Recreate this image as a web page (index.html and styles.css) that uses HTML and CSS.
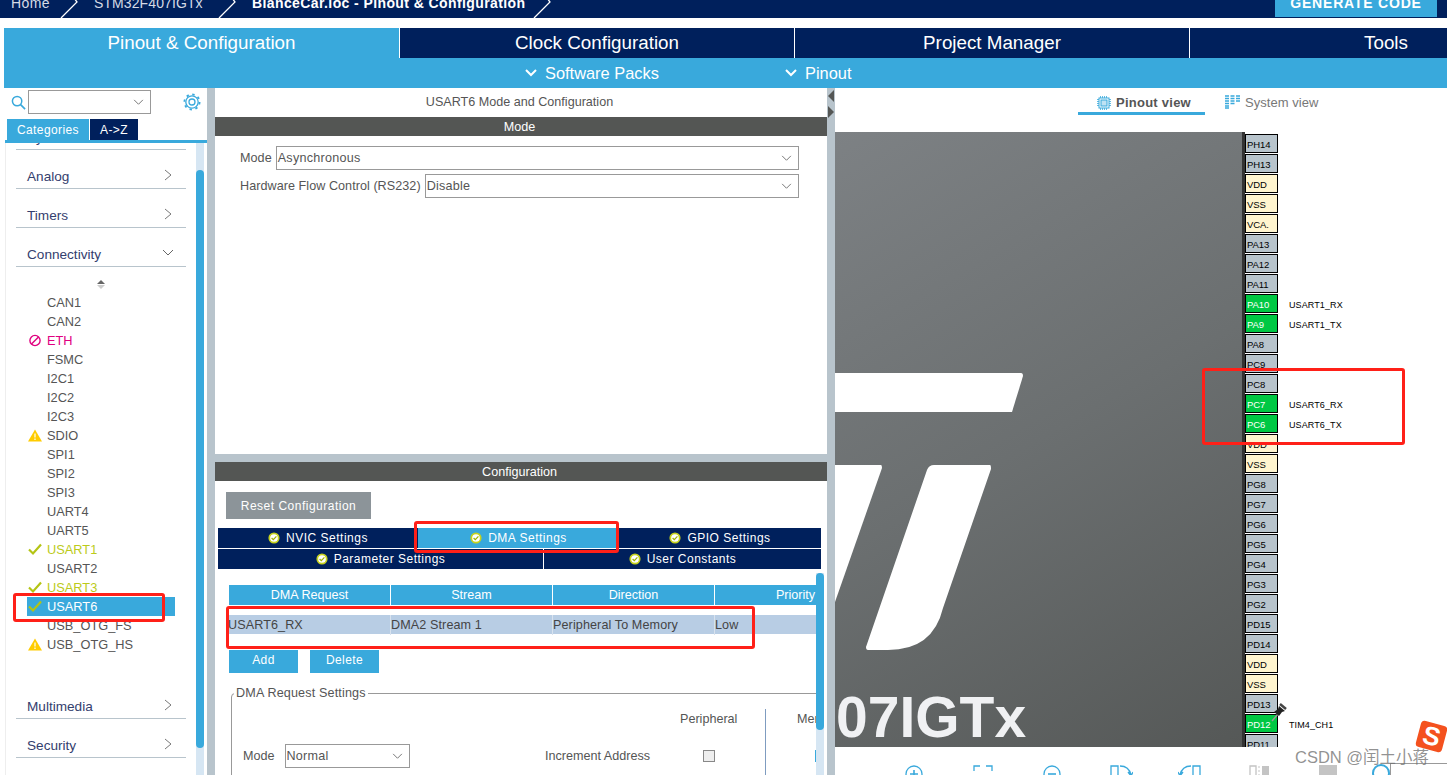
FILE: index.html
```html
<!DOCTYPE html>
<html lang="en">
<head>
    <meta charset="UTF-8">
    <title>STM32CubeMX - BlanceCar.ioc</title>
    <link rel="stylesheet" href="styles.css">
</head>
<body>
    <svg class="defs" width="0" height="0">
        <symbol id="ok" viewBox="0 0 14 14">
            <circle cx="7" cy="7" r="5.5" fill="#fff" stroke="#c6d21e" stroke-width="2"/>
            <path d="M4.2 7l2 2 3.6-4" fill="none" stroke="#9fb000" stroke-width="1.4"/>
        </symbol>
        <symbol id="check" viewBox="0 0 14 12">
            <path d="M1 6l4 4 8-9" fill="none" stroke="#b4c414" stroke-width="2.2"/>
        </symbol>
        <symbol id="warn" viewBox="0 0 14 12">
            <path d="M7 0l7 12H0z" fill="#ffcc00"/>
            <path d="M7 4v4M7 9v1.5" stroke="#fff" stroke-width="1.2"/>
        </symbol>
        <symbol id="right" viewBox="0 0 8 12">
            <path d="M1 1l6 5-6 5" fill="none" stroke="#777" stroke-width="1"/>
        </symbol>
        <symbol id="down" viewBox="0 0 12 8">
            <path d="M1 1l5 5 5-5" fill="none" stroke="#666" stroke-width="1"/>
        </symbol>
        <symbol id="wdown" viewBox="0 0 12 8">
            <path d="M1 1l5 5 5-5" fill="none" stroke="#fff" stroke-width="2"/>
        </symbol>
        <symbol id="slash" viewBox="0 0 20 18">
            <path d="M1 18L17 2L14 -2" fill="none" stroke="#fff" stroke-width="1.3"/>
        </symbol>
    </svg>

    <div class="topbar">
        <div class="crumbs">
            <span class="crumb crumb-home">Home</span>
            <svg class="slash"><use href="#slash"/></svg>
            <span class="crumb crumb-chip">STM32F407IGTx</span>
            <svg class="slash"><use href="#slash"/></svg>
            <span class="crumb crumb-file">BlanceCar.ioc - Pinout &amp; Configuration</span>
            <svg class="slash"><use href="#slash"/></svg>
        </div>
        <button class="generate">GENERATE CODE</button>
    </div>

    <div class="main-tabs">
        <div class="main-tab active">Pinout &amp; Configuration</div>
        <div class="main-tab">Clock Configuration</div>
        <div class="main-tab">Project Manager</div>
        <div class="main-tab last">Tools</div>
    </div>
    <div class="subbar">
        <span class="sub-item sub-packs"><svg class="sub-arrow"><use href="#wdown"/></svg>Software Packs</span>
        <span class="sub-item"><svg class="sub-arrow"><use href="#wdown"/></svg>Pinout</span>
    </div>

    <div class="workspace">
        <div class="side">
            <div class="search-row">
                <svg class="search-icon" viewBox="0 0 16 16"><circle cx="6.5" cy="6.5" r="5" fill="none" stroke="#39a9dc" stroke-width="1.6"/><path d="M10 10l5 5" stroke="#39a9dc" stroke-width="1.8"/></svg>
                <div class="search-box"><svg class="box-arrow"><use href="#down"/></svg></div>
                <svg class="gear" viewBox="0 0 18 18"><circle cx="9" cy="9" r="3" fill="none" stroke="#39a9dc" stroke-width="1.3"/><circle cx="9" cy="9" r="6.2" fill="none" stroke="#39a9dc" stroke-width="1.3"/><circle cx="9" cy="9" r="7.6" fill="none" stroke="#39a9dc" stroke-width="1.8" stroke-dasharray="2.4 3.57"/></svg>
            </div>
            <div class="side-tabs">
                <span class="side-tab active">Categories</span>
                <span class="side-tab">A-&gt;Z</span>
            </div>
            <div class="side-body">
                <div class="cats">
                    <div class="cat cut">System Core</div>
                    <div class="cat">Analog<svg class="cat-arrow"><use href="#right"/></svg></div>
                    <div class="cat">Timers<svg class="cat-arrow"><use href="#right"/></svg></div>
                    <div class="cat">Connectivity<svg class="cat-down"><use href="#down"/></svg></div>
                    <div class="sort-arrows"><i class="up"></i><i class="dn"></i></div>
                    <ul class="ips">
                        <li>CAN1</li>
                        <li>CAN2</li>
                        <li class="err"><svg class="ip-icon" viewBox="0 0 14 14"><circle cx="7" cy="7" r="5.5" fill="none" stroke="#e0007f" stroke-width="1.5"/><path d="M3.2 10.8l7.6-7.6" stroke="#e0007f" stroke-width="1.5"/></svg>ETH</li>
                        <li>FSMC</li>
                        <li>I2C1</li>
                        <li>I2C2</li>
                        <li>I2C3</li>
                        <li><svg class="ip-icon"><use href="#warn"/></svg>SDIO</li>
                        <li>SPI1</li>
                        <li>SPI2</li>
                        <li>SPI3</li>
                        <li>UART4</li>
                        <li>UART5</li>
                        <li class="on"><svg class="ip-icon"><use href="#check"/></svg>USART1</li>
                        <li>USART2</li>
                        <li class="on"><svg class="ip-icon"><use href="#check"/></svg>USART3</li>
                        <li class="selected"><svg class="ip-icon"><use href="#check"/></svg>USART6</li>
                        <li>USB_OTG_FS</li>
                        <li><svg class="ip-icon"><use href="#warn"/></svg>USB_OTG_HS</li>
                    </ul>
                    <div class="cat">Multimedia<svg class="cat-arrow"><use href="#right"/></svg></div>
                    <div class="cat">Security<svg class="cat-arrow"><use href="#right"/></svg></div>
                </div>
                <div class="scroll side-scroll"><div class="thumb"></div></div>
            </div>
        </div>

        <div class="gutter"></div>

        <div class="middle">
            <div class="mode-pane">
                <div class="pane-title">USART6 Mode and Configuration</div>
                <div class="pane-head">Mode</div>
                <div class="form-row">
                    <label>Mode</label>
                    <div class="select">Asynchronous<svg class="box-arrow"><use href="#down"/></svg></div>
                </div>
                <div class="form-row">
                    <label>Hardware Flow Control (RS232)</label>
                    <div class="select">Disable<svg class="box-arrow"><use href="#down"/></svg></div>
                </div>
            </div>
            <div class="hsplit"></div>
            <div class="config-pane">
                <div class="pane-head">Configuration</div>
                <button class="reset">Reset Configuration</button>
                <div class="cfg-tabs three">
                    <div class="cfg-tab"><svg class="ok"><use href="#ok"/></svg>NVIC Settings</div>
                    <div class="cfg-tab active"><svg class="ok"><use href="#ok"/></svg>DMA Settings</div>
                    <div class="cfg-tab"><svg class="ok"><use href="#ok"/></svg>GPIO Settings</div>
                </div>
                <div class="cfg-tabs two">
                    <div class="cfg-tab"><svg class="ok"><use href="#ok"/></svg>Parameter Settings</div>
                    <div class="cfg-tab"><svg class="ok"><use href="#ok"/></svg>User Constants</div>
                </div>
                <div class="cfg-body">
                    <div class="cfg-content">
                        <div class="dma-grid dma-head">
                            <div>DMA Request</div>
                            <div>Stream</div>
                            <div>Direction</div>
                            <div>Priority</div>
                        </div>
                        <div class="dma-grid dma-row">
                            <div>USART6_RX</div>
                            <div>DMA2 Stream 1</div>
                            <div>Peripheral To Memory</div>
                            <div>Low</div>
                        </div>
                        <div class="dma-btns">
                            <button class="dma-btn">Add</button>
                            <button class="dma-btn">Delete</button>
                        </div>
                        <fieldset class="dma-settings">
                            <legend>DMA Request Settings</legend>
                            <div class="dma-form">
                                <div class="col-periph">Peripheral</div>
                                <div class="col-mem">Memory</div>
                                <div class="mode-field">
                                    <span>Mode</span>
                                    <div class="select small">Normal<svg class="box-arrow"><use href="#down"/></svg></div>
                                </div>
                                <div class="inc-label">Increment Address</div>
                                <div class="inc-box"><span class="checkbox"></span></div>
                                <div class="inc-mem"><span class="checkbox blue"></span></div>
                            </div>
                        </fieldset>
                    </div>
                    <div class="scroll cfg-scroll"><div class="thumb"></div></div>
                </div>
            </div>
        </div>

        <div class="gutter narrow">
            <i class="tri-left"></i>
            <i class="tri-right"></i>
        </div>

        <div class="pinout">
            <div class="view-tabs">
                <div class="view-tab active">
                    <svg class="view-icon" viewBox="0 0 14 14"><rect x="2" y="2" width="10" height="10" fill="none" stroke="#39a9dc" stroke-width="1"/><rect x="4" y="4" width="6" height="6" fill="#bfe2f3" stroke="#39a9dc"/><path d="M3.5 0v2M5.5 0v2M7.5 0v2M9.5 0v2M3.5 12v2M5.5 12v2M7.5 12v2M9.5 12v2M0 3.5h2M0 5.5h2M0 7.5h2M0 9.5h2M12 3.5h2M12 5.5h2M12 7.5h2M12 9.5h2" stroke="#39a9dc" stroke-width=".8"/></svg>
                    Pinout view
                </div>
                <div class="view-tab system">
                    <svg class="view-icon sys" viewBox="0 0 15 14"><path d="M0 1h4M5.500 1h4M11 1h4M0 3.500h4M5.500 3.500h4M11 3.500h4M0 6h4M5.500 6h4M11 6h4M0 8.500h4M5.500 8.500h4M0 11h4M0 13h4" stroke="#39a9dc" stroke-width="1.300"/></svg>
                    System view
                </div>
            </div>
            <div class="stage">
                <div class="chip">
                    <svg class="st-logo" viewBox="835 132 405 615">
                        <path d="M835 373H1021q2 0 2 3L1012 412H835z" fill="#fff"/>
                        <path d="M835 465H881q1 0 1 3L835 602z" fill="#fff"/>
                        <path d="M927 470q2-5 7-5H990q1 0 1 4L943 608q-10 42-55 42H868q-2 0-2-3z" fill="#fff"/>
                    </svg>
                    <span class="chip-name">07IGTx</span>
                </div>
                <div class="pins">
                    <div class="pin-row"><span class="pin">PH14</span></div>
                    <div class="pin-row"><span class="pin">PH13</span></div>
                    <div class="pin-row"><span class="pin power">VDD</span></div>
                    <div class="pin-row"><span class="pin power">VSS</span></div>
                    <div class="pin-row"><span class="pin power">VCA.</span></div>
                    <div class="pin-row"><span class="pin">PA13</span></div>
                    <div class="pin-row"><span class="pin">PA12</span></div>
                    <div class="pin-row"><span class="pin">PA11</span></div>
                    <div class="pin-row"><span class="pin used">PA10</span><span class="pin-label">USART1_RX</span></div>
                    <div class="pin-row"><span class="pin used">PA9</span><span class="pin-label">USART1_TX</span></div>
                    <div class="pin-row"><span class="pin">PA8</span></div>
                    <div class="pin-row"><span class="pin">PC9</span></div>
                    <div class="pin-row"><span class="pin">PC8</span></div>
                    <div class="pin-row"><span class="pin used">PC7</span><span class="pin-label">USART6_RX</span></div>
                    <div class="pin-row"><span class="pin used">PC6</span><span class="pin-label">USART6_TX</span></div>
                    <div class="pin-row"><span class="pin power">VDD</span></div>
                    <div class="pin-row"><span class="pin power">VSS</span></div>
                    <div class="pin-row"><span class="pin">PG8</span></div>
                    <div class="pin-row"><span class="pin">PG7</span></div>
                    <div class="pin-row"><span class="pin">PG6</span></div>
                    <div class="pin-row"><span class="pin">PG5</span></div>
                    <div class="pin-row"><span class="pin">PG4</span></div>
                    <div class="pin-row"><span class="pin">PG3</span></div>
                    <div class="pin-row"><span class="pin">PG2</span></div>
                    <div class="pin-row"><span class="pin">PD15</span></div>
                    <div class="pin-row"><span class="pin">PD14</span></div>
                    <div class="pin-row"><span class="pin power">VDD</span></div>
                    <div class="pin-row"><span class="pin power">VSS</span></div>
                    <div class="pin-row"><span class="pin">PD13</span></div>
                    <div class="pin-row"><span class="pin used">PD12</span><span class="pin-label">TIM4_CH1</span></div>
                    <div class="pin-row"><span class="pin">PD11</span></div>
                </div>
            </div>
            <div class="toolbar">
                <svg class="tool" viewBox="0 0 24 24"><circle cx="12" cy="12" r="8" fill="none" stroke="#39a9dc" stroke-width="1.300"/><path d="M8 12h8M12 8v8" stroke="#39a9dc" stroke-width="1.600"/></svg>
                <svg class="tool" viewBox="0 0 24 24"><path d="M3 9V4h6M15 4h6v5M3 15v5h6M15 20h6v-5" fill="none" stroke="#39a9dc" stroke-width="1.300"/></svg>
                <svg class="tool" viewBox="0 0 24 24"><circle cx="12" cy="12" r="8" fill="none" stroke="#39a9dc" stroke-width="1.300"/><path d="M8 12h8" stroke="#39a9dc" stroke-width="1.600"/></svg>
                <svg class="tool" viewBox="0 0 24 24"><path d="M2 4h7v18H2z" fill="none" stroke="#39a9dc" stroke-width="1.300"/><path d="M11 4q9 0 11 9M19 10l3 4 2-4" fill="none" stroke="#39a9dc" stroke-width="1.300"/></svg>
                <svg class="tool" viewBox="0 0 24 24"><path d="M15 4h7v18h-7z" fill="none" stroke="#39a9dc" stroke-width="1.300"/><path d="M13 4q-9 0-11 9M0 10l2 4 3-4" fill="none" stroke="#39a9dc" stroke-width="1.300"/></svg>
                <svg class="tool" viewBox="0 0 24 24"><path d="M3 4h6v18H3z" fill="none" stroke="#c4c4c4" stroke-width="1.300"/><path d="M15 4h7v18h-7z" fill="#c4c4c4"/><path d="M12 4v18" stroke="#c4c4c4" stroke-dasharray="2 2"/></svg>
                <svg class="tool" viewBox="0 0 24 24"><path d="M3 3h18v10H3z" fill="#c4c4c4"/><path d="M3 16h18" stroke="#c4c4c4" stroke-dasharray="2 2"/></svg>
                <svg class="tool last" viewBox="0 0 24 24"><circle cx="12" cy="11" r="8" fill="none" stroke="#39a9dc" stroke-width="2"/></svg>
            </div>
        </div>
    </div>

    <!-- annotations drawn over the screenshot -->
    <div class="mark mark-ip"></div>
    <div class="mark mark-tab"></div>
    <div class="mark mark-row"></div>
    <div class="mark mark-pins"></div>

    <svg class="pushpin" viewBox="0 0 18 20">
        <path d="M2 18l6-7" stroke="#999" stroke-width="1.500"/>
        <path d="M9 3l6 5-3 1-3 4-5-4 4-3z" fill="#222"/>
        <path d="M10 1l6 5" stroke="#444" stroke-width="2.500"/>
    </svg>
    <div class="overlay-lines"></div>
    <div class="sogou"><span>S</span></div>
    <div class="watermark">CSDN @闰土小蒋</div>
</body>
</html>
```

FILE: styles.css
```css
* {
    box-sizing: border-box;
}
html, body {
    height: 100%;
}
body {
    margin: 0;
    padding: 0;
    font-family: "Liberation Sans", Arial, sans-serif;
    background: #fff;
    color: #555;
    overflow: hidden;
    position: relative;
}
button {
    font-family: inherit;
    border: none;
    padding: 0;
}
.defs {
    position: absolute;
}

/* top bar */
.topbar {
    height: 18px;
    background: #00205c;
    display: flex;
    justify-content: space-between;
    padding-right: 10px;
    overflow: hidden;
}
.crumbs {
    display: flex;
    color: #d5dbe6;
    font-size: 14px;
    height: 18px;
}
.crumb {
    line-height: 14px;
    margin-top: -4px;
    letter-spacing: .4px;
    white-space: nowrap;
}
.crumb-home {
    margin-left: 11px;
    width: 49px;
}
.crumb-chip {
    margin-left: 14px;
    width: 124px;
    letter-spacing: .1px;
}
.crumb-file {
    margin-left: 14px;
    width: 281px;
    color: #fff;
    font-weight: bold;
    letter-spacing: .4px;
}
.slash {
    width: 20px;
    height: 18px;
    flex-shrink: 0;
}
.generate {
    width: 162px;
    height: 17px;
    background: #39a9dc;
    color: #fff;
    font-size: 14px;
    font-weight: bold;
    line-height: 6px;
    letter-spacing: .8px;
    padding-bottom: 11px;
    overflow: hidden;
}

/* main tabs */
.main-tabs {
    margin: 10px 0 0 4px;
    height: 30px;
    display: flex;
}
.main-tab {
    width: 395px;
    background: #00205c;
    color: #fff;
    font-size: 18.8px;
    line-height: 30px;
    text-align: center;
    border-right: 1px solid #fff;
}
.main-tab.active {
    background: #39a9dc;
    width: 396px;
}
.main-tab.last {
    flex: 1;
    border-right: none;
    padding-left: 135px;
}
.subbar {
    margin-left: 4px;
    height: 30px;
    background: #39a9dc;
    color: #fff;
    font-size: 16.4px;
    line-height: 30px;
    display: flex;
    padding-left: 521px;
}
.sub-item {
    display: flex;
    align-items: center;
}
.sub-packs {
    width: 260px;
}
.sub-arrow {
    width: 12px;
    height: 8px;
    margin-right: 8px;
}

/* layout */
.workspace {
    display: flex;
    height: 687px;
    overflow: hidden;
}
.gutter {
    width: 8px;
    background: #b8c4cc;
    flex-shrink: 0;
}
.side {
    width: 207px;
    flex-shrink: 0;
    padding-left: 5px;
    display: flex;
    flex-direction: column;
}
.search-row {
    height: 31px;
    padding: 2px 0 0 6px;
    display: flex;
    align-items: flex-start;
}
.search-icon {
    width: 15px;
    height: 15px;
    margin: 5px 2px 0 0;
}
.search-box {
    width: 123px;
    height: 24px;
    border: 1px solid #999;
    position: relative;
}
.box-arrow {
    position: absolute;
    right: 6px;
    top: 50%;
    margin-top: -3px;
    width: 11px;
    height: 7px;
}
.gear {
    width: 18px;
    height: 18px;
    margin: 3px 0 0 32px;
}
.side-tabs {
    height: 24px;
    padding-left: 2px;
    border-bottom: 3px solid #39a9dc;
    display: flex;
    font-size: 12px;
    line-height: 22px;
    letter-spacing: .4px;
    color: #fff;
}
.side-tab {
    width: 48px;
    background: #00205c;
    text-align: center;
}
.side-tab.active {
    width: 82px;
    margin-right: 1px;
    background: #39a9dc;
}
.side-body {
    flex: 1;
    display: flex;
    min-height: 0;
    border-left: 1px solid #eee;
}
.cats {
    width: 190px;
    padding-left: 10px;
}
.cat {
    height: 39px;
    width: 170px;
    border-bottom: 1px solid #b8c4cc;
    display: flex;
    align-items: flex-end;
    justify-content: space-between;
    padding: 0 14px 3px 11px;
    color: #34406e;
    font-size: 13.6px;
    line-height: 16px;
    overflow: hidden;
}
.cat.cut {
    height: 7px;
}
.cat-arrow {
    width: 8px;
    height: 12px;
    margin: 0 0 4px;
}
.cat-down {
    width: 12px;
    height: 8px;
    margin: 0 -2px 6px 0;
}
.sort-arrows {
    height: 17px;
    width: 170px;
    padding-top: 13px;
    display: flex;
    flex-direction: column;
    align-items: center;
}
.sort-arrows i {
    display: block;
    width: 0;
    border-left: 4px solid transparent;
    border-right: 4px solid transparent;
}
.sort-arrows .up {
    border-bottom: 4px solid #666;
    margin-bottom: 1px;
}
.sort-arrows .dn {
    border-top: 4px solid #ccc;
}
.ips {
    list-style: none;
    margin: 9px 0 26px 11px;
    padding: 0 0 0 20px;
    width: 148px;
    font-size: 12.8px;
    color: #555;
}
.ips li {
    height: 19px;
    line-height: 19px;
    position: relative;
    white-space: nowrap;
}
.ip-icon {
    position: absolute;
    left: -19px;
    top: 3px;
    width: 14px;
    height: 13px;
}
.ips .err {
    color: #e0007f;
}
.ips .on {
    color: #bccb1a;
}
.ips .selected {
    margin-left: -20px;
    padding-left: 20px;
    background: #39a9dc;
    color: #fff;
}
.ips .selected .ip-icon {
    left: 1px;
}
.scroll {
    width: 8px;
    background: #d6e6f3;
}
.thumb {
    background: #39a9dc;
    border-radius: 4px;
}
.side-scroll .thumb {
    margin-top: 27px;
    height: 578px;
}

/* middle column */
.middle {
    width: 612px;
    flex-shrink: 0;
    display: flex;
    flex-direction: column;
    font-size: 12.6px;
}
.mode-pane {
    height: 366px;
}
.pane-title {
    height: 29px;
    line-height: 29px;
    text-align: center;
    padding-right: 3px;
    color: #555;
}
.pane-head {
    height: 19px;
    line-height: 20px;
    background: #545654;
    color: #fff;
    text-align: center;
    padding-right: 3px;
}
.form-row {
    display: flex;
    align-items: center;
    margin: 10px 28px 0 25px;
    height: 24px;
    gap: 4px;
    letter-spacing: .05px;
}
.form-row + .form-row {
    margin-top: 4px;
}
.select {
    flex: 1;
    height: 24px;
    line-height: 23px;
    border: 1px solid #999;
    padding-left: 1px;
    position: relative;
    letter-spacing: .25px;
}
.select.small {
    flex: none;
    width: 125px;
}
.hsplit {
    height: 8px;
    background: #b8c4cc;
}
.config-pane {
    flex: 1;
    min-height: 0;
    display: flex;
    flex-direction: column;
}
.reset {
    display: block;
    width: 145px;
    height: 27px;
    margin: 11px 0 9px 11px;
    background: #8c9499;
    color: #fff;
    font-size: 12px;
    letter-spacing: .5px;
}
.cfg-tabs {
    margin: 0 6px 0 3px;
    display: grid;
    color: #fff;
    font-size: 12px;
    letter-spacing: .5px;
}
.cfg-tabs.three {
    height: 20px;
    grid-template-columns: 200px 201px 1fr;
}
.cfg-tabs.two {
    height: 21px;
    grid-template-columns: 325px 1fr;
    border-top: 1px solid #fff;
}
.cfg-tab {
    background: #00205c;
    display: flex;
    align-items: center;
    justify-content: center;
    gap: 6px;
}
.cfg-tabs.two .cfg-tab + .cfg-tab {
    border-left: 1px solid #fff;
}
.cfg-tab.active {
    background: #39a9dc;
}
.ok {
    width: 12px;
    height: 12px;
}
.cfg-body {
    flex: 1;
    min-height: 0;
    display: flex;
    margin: 4px 3px 0 1px;
}
.cfg-content {
    width: 600px;
    overflow: hidden;
    padding: 12px 0 0 13px;
}
.dma-grid {
    display: grid;
    grid-template-columns: 161px 161px 161px 161px;
    column-gap: 1px;
    width: 650px;
}
.dma-head {
    height: 19px;
    line-height: 20px;
    text-align: center;
    color: #fff;
}
.dma-head div {
    background: #39a9dc;
}
.dma-row {
    margin: 11px 0 0 -1px;
    height: 19px;
    line-height: 20px;
    background: #b8cde4;
    color: #444;
    letter-spacing: .1px;
    column-gap: 0;
    grid-template-columns: 162px 162px 162px 162px;
}
.dma-row div + div {
    border-left: 1px solid #d8e2ee;
}
.dma-btns {
    display: flex;
    gap: 12px;
    margin-top: 16px;
}
.dma-btn {
    width: 69px;
    height: 23px;
    padding-bottom: 3px;
    background: #39a9dc;
    color: #fff;
    font-size: 12px;
    letter-spacing: .4px;
}
.dma-settings {
    margin: 13px 0 0 2px;
    width: 700px;
    padding: 9px 0 0 11px;
    border: 1px solid #999;
    border-radius: 4px 0 0 0;
}
.dma-settings legend {
    padding: 0 2px;
    margin-left: -9px;
    color: #555;
    letter-spacing: .15px;
}
.dma-form {
    display: grid;
    grid-template-columns: 302px 135px 85px 1fr;
    grid-template-rows: 35px 40px;
}
.col-periph {
    grid-column: 3;
    grid-row: 1;
    padding-top: 3px;
}
.col-mem {
    grid-column: 4;
    grid-row: 1;
    padding: 3px 0 0 31px;
    border-left: 1px solid #7f9cc0;
}
.mode-field {
    grid-column: 1;
    grid-row: 2;
    display: flex;
    align-items: center;
    gap: 10px;
    height: 24px;
}
.inc-label {
    grid-column: 2;
    grid-row: 2;
    line-height: 24px;
}
.inc-box {
    grid-column: 3;
    grid-row: 2;
    padding: 6px 0 0 23px;
}
.inc-mem {
    grid-column: 4;
    grid-row: 2;
    padding: 6px 0 0 49px;
    border-left: 1px solid #7f9cc0;
}
.checkbox {
    display: block;
    width: 12px;
    height: 12px;
    background: #eee;
    border: 1px solid #888;
}
.checkbox.blue {
    background: #fff;
    border-color: #39a9dc;
}
.cfg-scroll .thumb {
    height: 157px;
}

/* splitter with collapse arrows */
.gutter.narrow {
    position: relative;
}
.tri-left, .tri-right {
    position: absolute;
    width: 0;
    border-top: 6px solid transparent;
    border-bottom: 6px solid transparent;
}
.tri-left {
    left: 1px;
    top: 2px;
    border-right: 6px solid #545654;
}
.tri-right {
    left: 1px;
    top: 18px;
    border-left: 6px solid #545654;
}

/* pinout */
.pinout {
    flex: 1;
    min-width: 0;
    display: flex;
    flex-direction: column;
}
.view-tabs {
    height: 44px;
    padding: 4px 0 0 243px;
    display: flex;
    font-size: 13px;
    letter-spacing: .25px;
    color: #777;
}
.view-tab {
    height: 23px;
    display: flex;
    align-items: center;
    gap: 5px;
}
.view-tab.active {
    width: 127px;
    margin-right: 20px;
    padding: 1px 0 0 19px;
    font-weight: bold;
    color: #555;
    border-bottom: 3px solid #39a9dc;
}
.view-tab.system {
    padding-bottom: 3px;
    letter-spacing: .05px;
}
.view-icon {
    width: 14px;
    height: 14px;
}
.view-icon.sys {
    width: 15px;
}
.stage {
    height: 615px;
    display: flex;
    overflow: hidden;
}
.chip {
    width: 410px;
    flex-shrink: 0;
    position: relative;
    overflow: hidden;
    background: linear-gradient(150deg, #7d8184 0%, #6b6f70 50%, #555857 100%);
    border-right: 3px solid #333;
}
.st-logo {
    position: absolute;
    left: 0;
    top: 0;
    width: 405px;
    height: 615px;
}
.chip-name {
    position: absolute;
    left: 1px;
    bottom: -3px;
    color: #f0f1f3;
    font-size: 57px;
    font-weight: bold;
    line-height: 66px;
}
.pins {
    padding-top: 1px;
}
.pin-row {
    display: flex;
    align-items: center;
    height: 20px;
    color: #000;
    font-size: 9.5px;
}
.pin {
    width: 33px;
    height: 19px;
    line-height: 20px;
    border: 1px solid #000;
    padding-left: 1px;
    background: #b8c4cc;
    letter-spacing: -.1px;
}
.pin.power {
    background: #fff5cf;
}
.pin.used {
    background: #00c844;
    color: #fff;
}
.pin-label {
    margin-left: 11px;
    padding-top: 3px;
    font-size: 9px;
    letter-spacing: .1px;
}
.toolbar {
    flex: 1;
    min-height: 0;
    overflow: hidden;
    display: flex;
    gap: 45px;
    padding: 15px 0 0 67px;
}
.tool {
    width: 24px;
    height: 24px;
    flex-shrink: 0;
}
.tool.last {
    margin-left: -16px;
}

/* over everything */
.mark {
    position: absolute;
    border: 3px solid #ff2018;
    border-radius: 3px;
}
.mark-ip {
    left: 13px;
    top: 593px;
    width: 152px;
    height: 29px;
}
.mark-tab {
    left: 414px;
    top: 521px;
    width: 205px;
    height: 32px;
}
.mark-row {
    left: 226px;
    top: 606px;
    width: 529px;
    height: 43px;
}
.mark-pins {
    left: 1202px;
    top: 368px;
    width: 203px;
    height: 77px;
}
.pushpin {
    position: absolute;
    left: 1270px;
    top: 703px;
    width: 18px;
    height: 20px;
}
.overlay-lines {
    position: absolute;
    left: 1390px;
    top: 763px;
    width: 57px;
    height: 12px;
    border-left: 1px solid #999;
    border-top: 1px solid #999;
}
.sogou {
    position: absolute;
    left: 1418px;
    top: 723px;
    width: 27px;
    height: 27px;
    background: #f4511e;
    border-radius: 4px;
    transform: rotate(15deg);
    text-align: center;
    color: #fff;
    font-size: 26px;
    font-weight: bold;
    line-height: 27px;
}
.watermark {
    position: absolute;
    left: 1295px;
    top: 748px;
    color: rgba(110, 110, 110, .75);
    font-family: "Liberation Sans", "Noto Sans CJK SC", sans-serif;
    font-size: 16.5px;
    line-height: 18px;
    white-space: nowrap;
}
```
